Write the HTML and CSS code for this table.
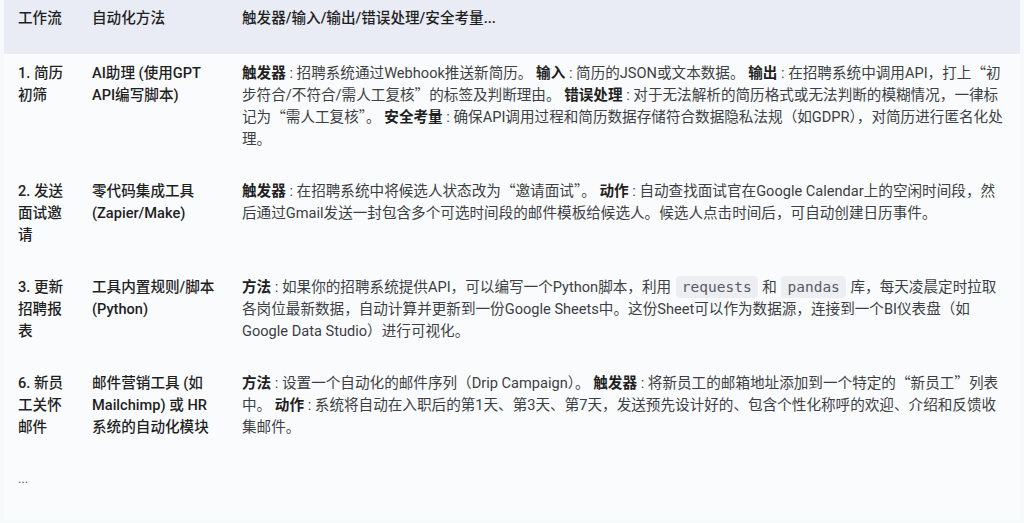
FILE: index.html
```html
<!DOCTYPE html>
<html lang="zh-CN">
<head>
<meta charset="utf-8">
<title>工作流自动化</title>
<link rel="stylesheet" href="styles.css">
</head>
<body>
<div class="table">
  <div class="row head">
    <div class="cell name">工作流</div>
    <div class="cell tool">自动化方法</div>
    <div class="cell">触发器/输入/输出/错误处理/安全考量...</div>
  </div>
  <div class="row first">
    <div class="cell name">1. 简历初筛</div>
    <div class="cell tool">AI助理 (使用GPT API编写脚本)</div>
    <div class="cell desc"><b>触发器</b> : 招聘系统通过Webhook推送新简历。 <b>输入</b> : 简历的JSON或文本数据。 <b>输出</b> : 在招聘系统中调用API，打上<span class="q">“</span>初步符合/不符合/需人工复核<span class="q">”</span>的标签及判断理由。 <b>错误处理</b> : 对于无法解析的简历格式或无法判断的模糊情况，一律标记为<span class="q">“</span>需人工复核<span class="q">”</span>。 <b>安全考量</b> : 确保API调用过程和简历数据存储符合数据隐私法规（如GDPR），对简历进行匿名化处理。</div>
  </div>
  <div class="row">
    <div class="cell name">2. 发送面试邀请</div>
    <div class="cell tool">零代码集成工具 (Zapier/Make)</div>
    <div class="cell desc"><b>触发器</b> : 在招聘系统中将候选人状态改为<span class="q">“</span>邀请面试<span class="q">”</span>。 <b>动作</b> : 自动查找面试官在Google Calendar上的空闲时间段，然后通过Gmail发送一封包含多个可选时间段的邮件模板给候选人。候选人点击时间后，可自动创建日历事件。</div>
  </div>
  <div class="row">
    <div class="cell name">3. 更新招聘报表</div>
    <div class="cell tool">工具内置规则/脚本 (Python)</div>
    <div class="cell desc"><b>方法</b> : 如果你的招聘系统提供API，可以编写一个Python脚本，利用 <code>requests</code> 和 <code>pandas</code> 库，每天凌晨定时拉取各岗位最新数据，自动计算并更新到一份Google Sheets中。这份Sheet可以作为数据源，连接到一个BI仪表盘（如Google Data Studio）进行可视化。</div>
  </div>
  <div class="row">
    <div class="cell name">6. 新员工关怀邮件</div>
    <div class="cell tool">邮件营销工具 (如 Mailchimp) 或 HR 系统的自动化模块</div>
    <div class="cell desc"><b>方法</b> : 设置一个自动化的邮件序列（Drip Campaign）。 <b>触发器</b> : 将新员工的邮箱地址添加到一个特定的<span class="q">“</span>新员工<span class="q">”</span>列表中。 <b>动作</b> : 系统将自动在入职后的第1天、第3天、第7天，发送预先设计好的、包含个性化称呼的欢迎、介绍和反馈收集邮件。</div>
  </div>
  <div class="row more">
    <div class="cell name ellipsis">...</div>
  </div>
</div>
</body>
</html>
```

FILE: styles.css
```css
* { box-sizing: border-box; }

html, body {
  margin: 0;
  padding: 0;
}

body {
  background: #f7fafb;
  font-family: "Roboto", "Noto Sans CJK SC", sans-serif;
  font-size: 14.6px;
  line-height: 22px;
  color: #1f1f1f;
}

.table {
  margin-left: 4px;
  width: 1016px;
  height: 520px;
  background: #fafbfd;
}

.row {
  display: grid;
  grid-template-columns: 74px 150px 1fr;
  padding: 15px 0;
}

.row.head {
  height: 54px;
  padding: 7px 0 0;
  background: #e9ecf5;
  font-weight: 500;
  color: #1f1f1f;
}

.row.first {
  padding-top: 8px;
}

.cell {
  padding: 0 14px;
}

.name {
  padding-right: 8px;
}

.tool {
  padding-right: 10px;
}

.name, .tool {
  font-weight: 500;
  color: #1f1f1f;
}

.desc {
  padding-right: 14px;
  color: #3c3f43;
}

.desc b {
  font-weight: 600;
  color: #1f1f1f;
}

.q {
  font-family: "Noto Sans CJK SC", sans-serif;
  line-height: 1;
}

code {
  font-family: "DejaVu Sans Mono", "Liberation Mono", monospace;
  font-size: 14.5px;
  line-height: 1;
  color: #575b61;
  background: #eceef2;
  border-radius: 4px;
  padding: 3px 6px;
  margin: 0 1px;
}

.ellipsis {
  color: #5f6368;
  font-size: 13px;
  font-weight: 400;
}
```
